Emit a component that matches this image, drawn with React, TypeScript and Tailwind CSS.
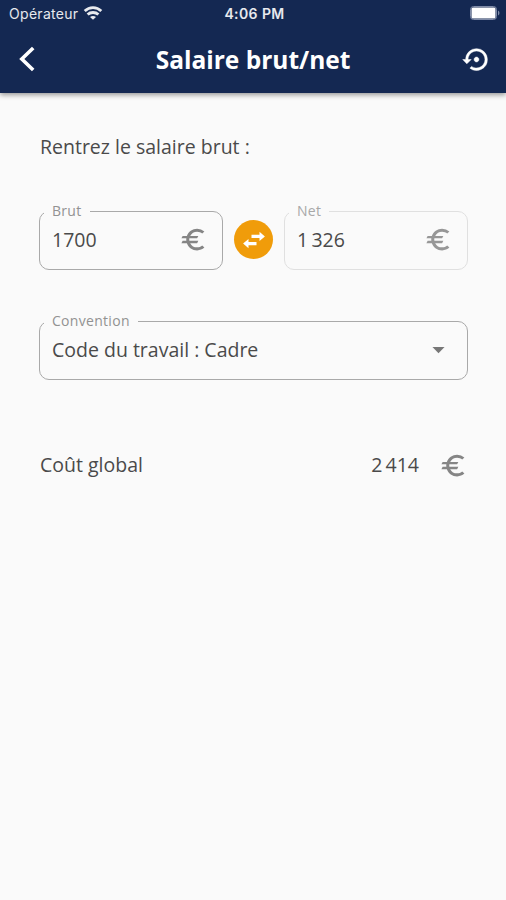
import { useState } from "react";
import type { ReactNode } from "react";
import { clsx } from "clsx";
import { MdArrowDropDown, MdEuro } from "react-icons/md";

const formatAmount = (value: number) =>
  value.toString().replace(/\B(?=(\d{3})+$)/g, "\u2009");

function StatusBar() {
  return (
    <div className="grid h-[26px] grid-cols-[1fr_auto_1fr] items-center pl-[9px] pr-[6px] font-['Inter',sans-serif] text-white/90">
      <div className="flex items-center gap-[5px]">
        <span className="text-[14px] tracking-[0.3px]">Opérateur</span>
        <svg width="20" height="14" viewBox="0 0 19 14" fill="none" stroke="currentColor" strokeWidth="2.8">
          <path d="M1.2 5.1C6 .5 13 .5 17.8 5.1" />
          <path d="M4.1 8.6c3-2.8 7.8-2.8 10.8 0" />
          <path d="M9.5 13.8 6.5 11c1.6-1.4 4.4-1.4 6 0z" fill="currentColor" stroke="none" />
        </svg>
      </div>
      <span className="text-[14px] font-semibold tracking-[0.4px]">4:06 PM</span>
      <svg className="justify-self-end" width="30" height="14" viewBox="0 0 30 14">
        <rect x=".5" y=".5" width="26" height="13" rx="3" fill="none" stroke="#7f8ba8" />
        <rect x="1.5" y="1.5" width="24" height="11" rx="1.5" fill="#fff" />
        <path d="M28 4.5c2 1 2 4 0 5z" fill="#7f8ba8" />
      </svg>
    </div>
  );
}

function ResetIcon() {
  return (
    <svg width="29" height="29" viewBox="0 0 24 24" fill="currentColor" stroke="currentColor" strokeWidth="0.4">
      <path d="M14 12c0-1.1-.9-2-2-2s-2 .9-2 2 .9 2 2 2 2-.9 2-2zm-2-9a9 9 0 0 0-9 9H.6L4 15.6 7.6 12H5c0-3.87 3.13-7 7-7s7 3.13 7 7-3.13 7-7 7c-1.51 0-2.91-.49-4.06-1.3l-1.42 1.44A8.98 8.98 0 0 0 21 12a9 9 0 0 0-9-9z" />
    </svg>
  );
}

function AppHeader({ title, onReset }: { title: string; onReset: () => void }) {
  return (
    <header className="relative h-[93px] bg-[#142852] shadow-[0_2px_5px_rgba(0,0,0,0.4)]">
      <StatusBar />
      <div className="grid h-[66px] grid-cols-[48px_1fr_48px] items-center text-white">
        <button className="flex pl-[19px]" aria-label="Retour">
          <svg width="16" height="26" viewBox="0 0 16 26" fill="none" stroke="currentColor" strokeWidth="3.6">
            <path d="M14.2 2 2.8 13l11.4 11" />
          </svg>
        </button>
        <h1 className="pt-[2px] text-center text-[24.5px] font-bold leading-none">{title}</h1>
        <button className="flex pl-[4px]" aria-label="Réinitialiser" onClick={onReset}>
          <ResetIcon />
        </button>
      </div>
    </header>
  );
}

type OutlinedFieldProps = {
  label: string;
  disabled?: boolean;
  children: ReactNode;
};

function OutlinedField({ label, disabled, children }: OutlinedFieldProps) {
  return (
    <fieldset
      className={clsx(
        "h-[66px] min-w-0 rounded-[10px] border-[1.4px] pl-[4px] pr-[14px]",
        disabled ? "border-[#e0e0e0]" : "border-[#a9a9a9]"
      )}
    >
      <legend
        className={clsx(
          "h-[14px] px-[8px] text-[14px] leading-[14px] tracking-[0.3px]",
          disabled ? "text-[#a8a8a8]" : "text-[#929292]"
        )}
      >
        {label}
      </legend>
      <div className="flex h-[43px] items-center justify-between pl-[8px]">{children}</div>
    </fieldset>
  );
}

export default function App() {
  const [gross, setGross] = useState(1700);
  const net = Math.round(gross * 0.78);
  const cost = Math.round(gross * 1.42);

  return (
    <div className="flex h-[900px] w-[506px] flex-col bg-[#fafafa] font-['Open_Sans',sans-serif] text-[19.5px] text-[#4a4a4a]">
      <AppHeader title="Salaire brut/net" onReset={() => setGross(1700)} />

      <main className="pl-[39px] pr-[38px] pt-[40px]">
        <p className="pl-px leading-[28px]">Rentrez le salaire brut :</p>

        <div className="mt-[43px] grid grid-cols-[184px_61px_184px]">
          <OutlinedField label="Brut">
            <span>{gross}</span>
            <MdEuro size={29} color="#858585" />
          </OutlinedField>
          <div className="flex justify-center pt-[16px]">
            <button
              className="flex size-[39px] items-center justify-center rounded-full bg-[#f09c0a] text-white"
              aria-label="Inverser"
            >
              <svg width="24" height="18" viewBox="0 0 24 18" fill="currentColor">
                <path d="M9.5 3.8h8V.8l5.4 4.6-5.4 4.6V7h-8z" />
                <path d="M14.5 11h-8V8l-5.4 4.6 5.4 4.6v-3h8z" />
              </svg>
            </button>
          </div>
          <OutlinedField label="Net" disabled>
            <span>{formatAmount(net)}</span>
            <MdEuro size={29} color="#979797" />
          </OutlinedField>
        </div>

        <div className="mt-[44px]">
          <OutlinedField label="Convention">
            <span>Code du travail : Cadre</span>
            <MdArrowDropDown size={29} color="#777" />
          </OutlinedField>
        </div>

        <div className="mt-[70px] flex h-[30px] items-center pl-px">
          <span className="flex-1">Coût global</span>
          <span>{formatAmount(cost)}</span>
          <MdEuro className="ml-[20px]" size={29} color="#858585" />
        </div>
      </main>
    </div>
  );
}
